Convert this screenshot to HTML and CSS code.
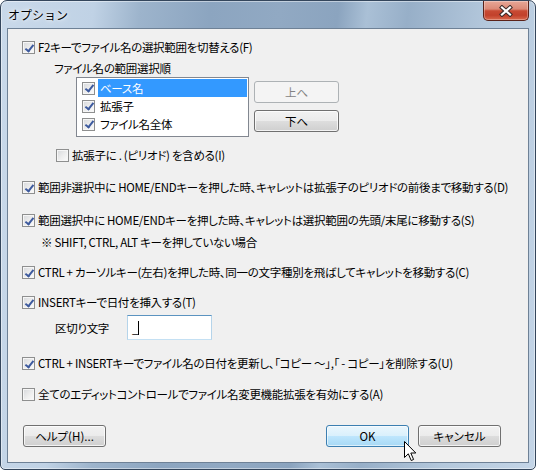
FILE: index.html
```html
<!doctype html>
<html lang="ja">

<head>
  <meta charset="utf-8">
  <title>オプション</title>
  <link rel="stylesheet" href="styles.css">
</head>

<body>
  <div class="window">
    <div class="titlebar">
      <span class="title">オプション</span>
      <button type="button" class="close">
        <svg width="14" height="12" viewBox="0 0 14 12">
          <path d="M3 2.5 L11 9.5 M11 2.5 L3 9.5" stroke="#3a2a28" stroke-width="4.2" stroke-linecap="square" fill="none" />
          <path d="M3 2.5 L11 9.5 M11 2.5 L3 9.5" stroke="#ffffff" stroke-width="2.2" stroke-linecap="square" fill="none" />
        </svg>
      </button>
    </div>

    <div class="client">
      <form class="options">
        <label class="opt"><span class="cb on"></span>F2キーでファイル名の選択範囲を切替える(F)</label>
        <div class="sub-label">ファイル名の範囲選択順</div>
        <div class="order">
          <ul class="listbox">
            <li class="selected"><span class="cb on"></span><span class="item">ベース名</span></li>
            <li><span class="cb on"></span><span class="item">拡張子</span></li>
            <li><span class="cb on"></span><span class="item">ファイル名全体</span></li>
          </ul>
          <div class="order-buttons">
            <button type="button" class="btn btn-move" disabled>上へ</button>
            <button type="button" class="btn btn-move">下へ</button>
          </div>
        </div>
        <label class="opt opt-period"><span class="cb"></span>拡張子に . (ピリオド) を含める(I)</label>

        <label class="opt opt-d"><span class="cb on"></span>範囲非選択中に HOME/ENDキーを押した時、キャレットは拡張子のピリオドの前後まで移動する(D)</label>
        <label class="opt opt-s"><span class="cb on"></span>範囲選択中に HOME/ENDキーを押した時、キャレットは選択範囲の先頭/末尾に移動する(S)</label>
        <div class="note">※ SHIFT, CTRL, ALT キーを押していない場合</div>
        <label class="opt opt-c"><span class="cb on"></span>CTRL + カーソルキー(左右)を押した時、同一の文字種別を飛ばしてキャレットを移動する(C)</label>
        <label class="opt opt-t"><span class="cb on"></span>INSERTキーで日付を挿入する(T)</label>
        <div class="sep-row">
          <span class="sep-label">区切り文字</span>
          <div class="textbox"><span>_</span><span class="caret"></span></div>
        </div>
        <label class="opt opt-u"><span class="cb on"></span>CTRL + INSERTキーでファイル名の日付を更新し、「コピー ～」,「 - コピー」を削除する(U)</label>
        <label class="opt opt-a"><span class="cb"></span>全てのエディットコントロールでファイル名変更機能拡張を有効にする(A)</label>
      </form>

      <div class="footer">
        <button type="button" class="btn">ヘルプ(H)...</button>
        <button type="button" class="btn btn-default">OK</button>
        <button type="button" class="btn">キャンセル</button>
      </div>
    </div>

    <!-- mouse pointer resting on OK -->
    <svg class="pointer" width="13" height="21" viewBox="0 0 13 21">
      <path d="M0.5 0.5 L0.5 16.5 L4.3 12.8 L7.2 19.5 L9.6 18.5 L6.8 12 L11.8 12 Z" fill="#fff" stroke="#000" stroke-width="1" stroke-linejoin="miter" />
    </svg>
  </div>
</body>

</html>
```

FILE: styles.css
```css
* {
  box-sizing: border-box;
}

body {
  margin: 0;
  font-family: "Noto Sans CJK JP", sans-serif;
  font-size: 11.5px;
  letter-spacing: -0.3px;
  color: #000;
  background: #fff;
  font-feature-settings: "palt";
}

/* aero glass frame */
.window {
  position: relative;
  width: 536px;
  height: 470px;
  display: flex;
  flex-direction: column;
  padding: 0 6px 6px;
  border: 1px solid #34465c;
  border-radius: 7px 7px 5px 5px;
  background: linear-gradient(96deg, #c9d9ea 0%, #c0d2e5 16%, #9db4cc 24%, #8ca5c0 36%, #91a9c3 48%, #8ba4bf 58%, #aac0d6 63%, #97afc8 70%, #b4c8dc 84%, #c4d5e7 100%);
  box-shadow: inset 0 0 0 1px rgba(255, 255, 255, 0.45);
}

.titlebar {
  height: 27px;
  display: flex;
  align-items: flex-start;
}

.title {
  margin: 6px 0 0 1px;
  font-size: 12px;
  letter-spacing: 0;
  line-height: 15px;
  font-feature-settings: normal;
  text-shadow: 0 0 6px rgba(255, 255, 255, 0.9), 0 0 3px rgba(255, 255, 255, 0.8);
}

.close {
  margin-left: auto;
  width: 46px;
  height: 20px;
  padding: 0;
  display: flex;
  align-items: center;
  justify-content: center;
  border: 1px solid #5a2219;
  border-top: none;
  border-radius: 0 0 5px 5px;
  background: linear-gradient(#e7a797 0%, #dc8a77 42%, #c84a33 52%, #c2412b 75%, #d9694d 100%);
  box-shadow: inset 0 0 0 1px rgba(255, 255, 255, 0.3);
}

.client {
  flex: 1;
  display: flex;
  flex-direction: column;
  background: #f0f0f0;
  border: 1px solid #6e8196;
}

.options {
  display: flex;
  flex-direction: column;
  align-items: flex-start;
  padding: 11px 0 0 14px;
}

.opt {
  display: flex;
  align-items: center;
  gap: 3px;
  height: 15px;
  line-height: 15px;
  white-space: nowrap;
}

/* classic win7 checkbox */
.cb {
  position: relative;
  flex: none;
  width: 13px;
  height: 13px;
  border: 1px solid #8e8f8f;
  background: linear-gradient(135deg, #d6d8db 0%, #eeeeee 55%, #fbfbfb 100%);
  box-shadow: inset 0 0 0 1px #f6f6f6;
}

.cb.on::after {
  content: "";
  position: absolute;
  left: 3.5px;
  top: 0.5px;
  width: 3px;
  height: 7px;
  border-right: 2px solid #3d5a9e;
  border-bottom: 2px solid #3d5a9e;
  transform: rotate(38deg);
}

.sub-label {
  margin: 6px 0 0 32px;
  height: 15px;
  line-height: 15px;
}

.order {
  display: flex;
  gap: 5px;
  margin: 1px 0 0 54px;
}

.listbox {
  width: 173px;
  height: 60px;
  margin: 0;
  padding: 1px 1px 0 5px;
  list-style: none;
  background: #fff;
  border: 1px solid #828790;
}

.listbox li {
  display: flex;
  align-items: center;
  gap: 3px;
  height: 18px;
}

.item {
  flex: 1;
  height: 18px;
  line-height: 18px;
  padding-left: 2px;
}

.listbox li.selected .item {
  background: #3399ff;
  color: #fff;
}

.order-buttons {
  display: flex;
  flex-direction: column;
  gap: 7px;
  padding-top: 4px;
}

.btn {
  width: 83px;
  height: 22px;
  padding: 0;
  font: inherit;
  line-height: 18px;
  color: #000;
  border: 1px solid #707070;
  border-radius: 3px;
  background: linear-gradient(#f2f2f2 0%, #ebebeb 50%, #dddddd 51%, #cfcfcf 100%);
  box-shadow: inset 0 0 0 1px rgba(255, 255, 255, 0.75);
}

.btn-move {
  width: 85px;
}

.btn:disabled {
  color: #838383;
  border-color: #adb2b5;
  background: #f4f4f4;
  box-shadow: none;
}

.btn-default {
  margin-left: auto;
  border-color: #3c7fb1;
  background: linear-gradient(#eaf6fd 0%, #d9f0fc 50%, #bee6fd 51%, #a7d9f5 100%);
  box-shadow: inset 0 0 0 1px rgba(255, 255, 255, 0.6);
}

.opt-period {
  margin: 11px 0 0 34px;
}

.opt-d {
  margin-top: 17px;
}

.opt-s {
  margin-top: 18px;
}

.note {
  margin: 7px 0 0 19px;
  height: 15px;
  line-height: 15px;
}

.opt-c,
.opt-t {
  margin-top: 15px;
}

.sep-row {
  display: flex;
  align-items: center;
  margin: 5px 0 0 33px;
}

.sep-label {
  width: 72px;
}

.textbox {
  width: 85px;
  height: 25px;
  display: flex;
  align-items: center;
  padding-left: 4px;
  background: #fff;
  border: 1px solid;
  border-color: #5b93c0 #b5d4ea #c4e0f3 #b5d4ea;
}

.caret {
  width: 1px;
  height: 14px;
  background: #000;
  margin-left: 0;
}

.opt-u,
.opt-a {
  margin-top: 16px;
}

.footer {
  display: flex;
  gap: 9px;
  margin-top: auto;
  padding: 0 27px 15px 15px;
}

.pointer {
  position: absolute;
  left: 403px;
  top: 440px;
}
```
